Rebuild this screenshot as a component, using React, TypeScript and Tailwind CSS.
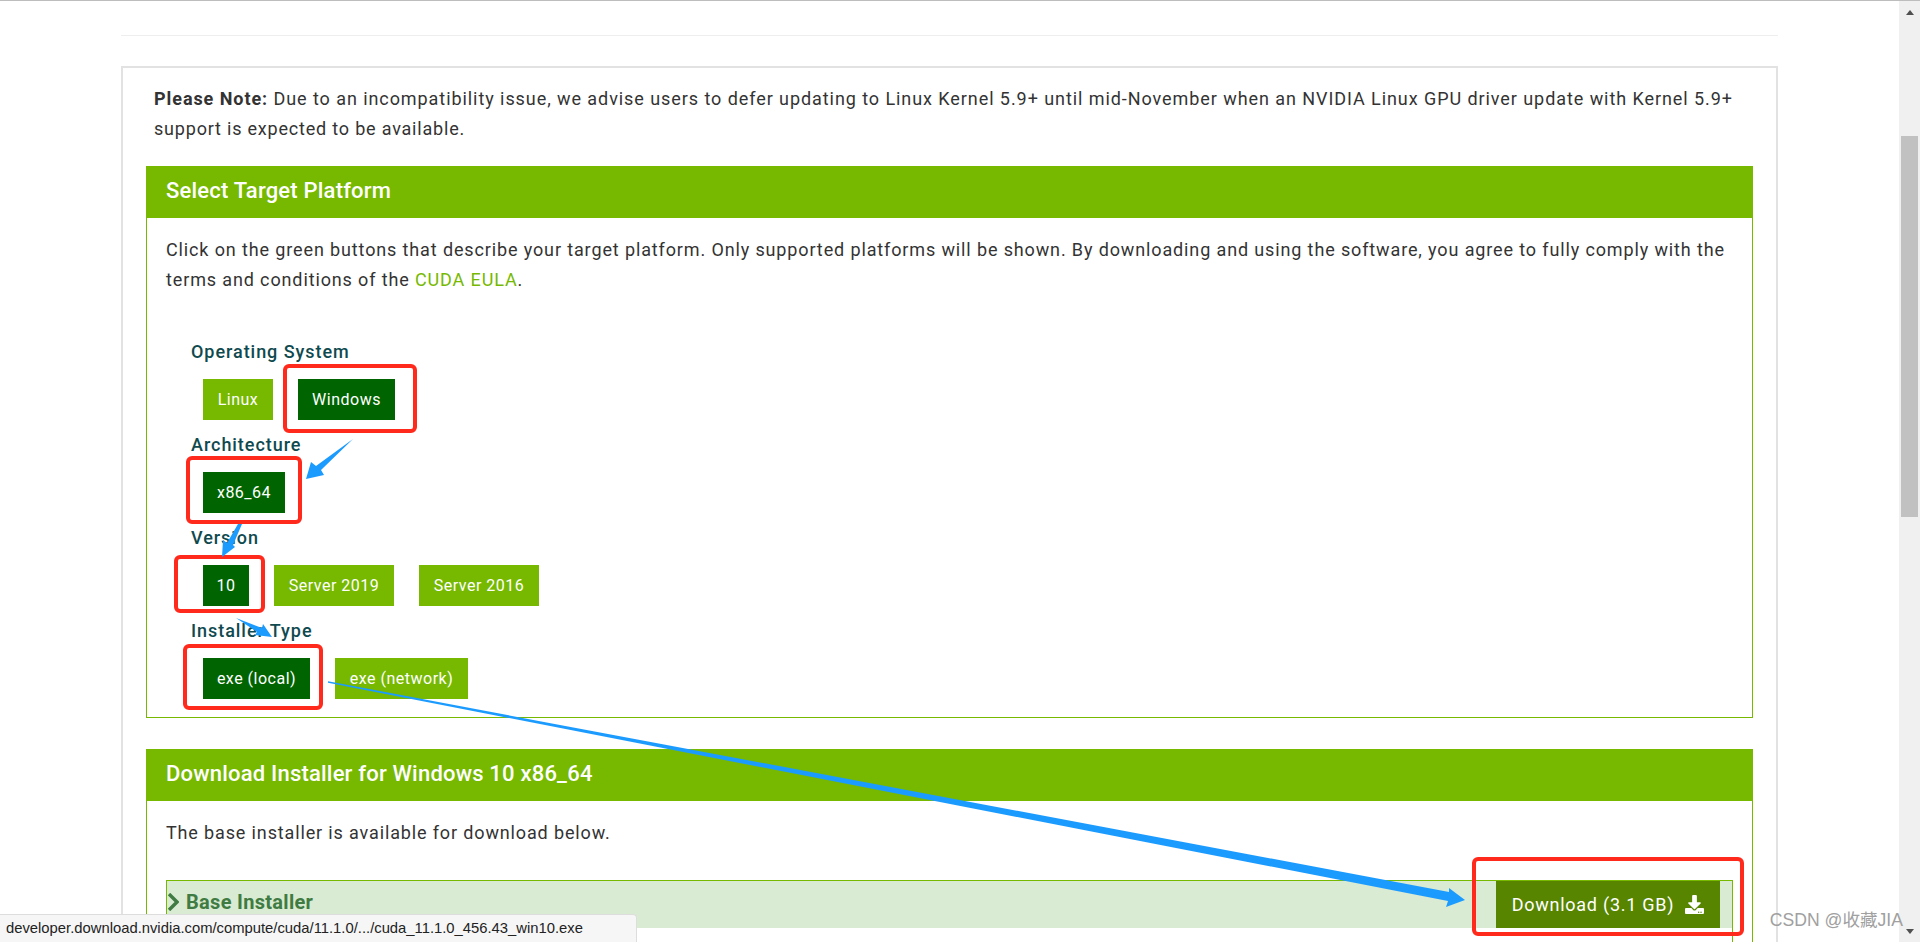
import { FaDownload } from "react-icons/fa";

const PlatformButton = ({ label, active, className }: { label: string; active?: boolean; className: string }) => (
  <div
    className={`h-[41px] flex items-center justify-center text-white text-[16px] tracking-[0.5px] ${active ? "bg-[#006400]" : "bg-[#76b900]"} ${className}`}
  >
    {label}
  </div>
);

const OptionLabel = ({ children }: { children: string }) => (
  <div className="h-[28px] ml-[44px] text-[18px] leading-[28px] font-medium text-[#0f4a4f] tracking-[0.95px]">{children}</div>
);

const Annotations = () => (
  <svg className="absolute left-0 top-0 pointer-events-none" width="1920" height="942" viewBox="0 0 1920 942" fill="none">
    <g stroke="#ff2a1c" strokeWidth="4">
      <rect x="285" y="366" width="130" height="65" rx="4" />
      <rect x="188" y="458" width="112" height="64" rx="4" />
      <rect x="176" y="557" width="87" height="54" rx="4" />
      <rect x="185" y="646" width="136" height="62" rx="4" />
      <rect x="1474" y="859" width="268" height="75" rx="4" />
    </g>
    <g fill="#1c9bff">
      <path d="M353 439 L321 470 L324 475 L306 479 L311 462 L316 466 Z" />
      <path d="M242 524 L233 545 L235 547 L222 557 L223 540 L227 543 L238 524 Z" />
      <path d="M236 618 L262 628 L263 624 L272 637 L255 635 L257 632 Z" />
      <path d="M328 681.3 L1449 892 L1449 888 L1465 900 L1446 907 L1448 901 L328 682.8 Z" />
    </g>
  </svg>
);

export default function App() {
  return (
    <div className="relative h-[942px] w-[1920px] overflow-hidden bg-white text-[#333] font-['Roboto',sans-serif]">
      <div className="h-px bg-[#bdbdbd]" />
      <div className="w-[1657px] ml-[121px] mt-[34px] border-t border-[#eeeeee]" />
      <div className="w-[1657px] ml-[121px] mt-[30px] border-2 border-[#e2e2e2] border-b-0 px-[23px] h-[900px]">
        <p className="mt-[16px] ml-[8px] text-[18px] leading-[30px] tracking-[0.93px] whitespace-nowrap">
          <b className="font-bold">Please Note:</b> Due to an incompatibility issue, we advise users to defer updating to Linux Kernel 5.9+ until mid-November when an NVIDIA Linux GPU driver update with Kernel 5.9+
          <br />
          <span className="tracking-[0.8px]">support is expected to be available.</span>
        </p>

        <section className="mt-[22px] border border-[#76b900]">
          <div className="h-[52px] -m-px mb-0 pb-[4px] bg-[#76b900] text-white text-[22px] font-medium tracking-[0.2px] flex items-center pl-[20px]">
            Select Target Platform
          </div>
          <div className="h-[499px] pt-[17px]">
            <p className="ml-[19px] text-[18px] leading-[30px] tracking-[0.87px] whitespace-nowrap">
              Click on the green buttons that describe your target platform. Only supported platforms will be shown. By downloading and using the software, you agree to fully comply with the
              <br />
              terms and conditions of the <span className="text-[#76b900]">CUDA EULA</span>.
            </p>
            <div className="mt-[43px]">
              <OptionLabel>Operating System</OptionLabel>
              <div className="flex ml-[56px] mt-[13px] mb-[11px] gap-[25px]">
                <PlatformButton label="Linux" className="w-[70px]" />
                <PlatformButton label="Windows" active className="w-[97px]" />
              </div>
              <OptionLabel>Architecture</OptionLabel>
              <div className="flex ml-[56px] mt-[13px] mb-[11px]">
                <PlatformButton label="x86_64" active className="w-[82px]" />
              </div>
              <OptionLabel>Version</OptionLabel>
              <div className="flex ml-[56px] mt-[13px] mb-[11px] gap-[25px]">
                <PlatformButton label="10" active className="w-[46px]" />
                <PlatformButton label="Server 2019" className="w-[120px]" />
                <PlatformButton label="Server 2016" className="w-[120px]" />
              </div>
              <OptionLabel>Installer Type</OptionLabel>
              <div className="flex ml-[56px] mt-[13px] gap-[25px]">
                <PlatformButton label="exe (local)" active className="w-[107px]" />
                <PlatformButton label="exe (network)" className="w-[133px]" />
              </div>
            </div>
          </div>
        </section>

        <section className="mt-[31px] border border-[#76b900]">
          <div className="h-[52px] -m-px mb-0 pb-[4px] bg-[#76b900] text-white text-[22px] font-medium tracking-[0.2px] flex items-center pl-[20px]">
            Download Installer for Windows 10 x86_64
          </div>
          <div className="pt-[17px] px-[19px] h-[300px]">
            <p className="text-[18px] leading-[30px] tracking-[0.86px]">The base installer is available for download below.</p>
            <div className="mt-[32px] border border-[#76b900] h-[200px]">
              <div className="h-[47px] bg-[#d9ebd3] flex items-center justify-between pr-[12px]">
                <div className="flex items-center pb-[5px] text-[20px] font-bold tracking-[0.3px] text-[#3f7b42]">
                  <svg width="12" height="18" viewBox="0 0 12 18" className="mr-[7px]">
                    <path d="M2 1 L10 9 L2 17" fill="none" stroke="#3f7b42" strokeWidth="3.4" />
                  </svg>
                  Base Installer
                </div>
                <div className="w-[224px] h-[47px] bg-[#578500] text-white text-[18px] tracking-[0.75px] flex items-center justify-center gap-[11px]">
                  Download (3.1 GB)
                  <FaDownload size={19} />
                </div>
              </div>
            </div>
          </div>
        </section>
      </div>

      <Annotations />

      <div className="absolute left-0 bottom-0 w-[637px] h-[28px] bg-[#f6f6f6] border-t border-r border-[#dddddd] rounded-tr-[4px] pl-[6px] flex items-center font-['Liberation_Sans',sans-serif] text-[14.8px] text-[#222]">
        developer.download.nvidia.com/compute/cuda/11.1.0/.../cuda_11.1.0_456.43_win10.exe
      </div>

      <div className="absolute right-0 top-[1px] bottom-0 w-[21px] bg-[#f0f0f0] flex flex-col items-center">
        <div className="mt-[9px] w-0 h-0 border-x-[4.5px] border-x-transparent border-b-[5px] border-b-[#505050]" />
        <div className="mt-[121px] h-[381px] w-[17px] bg-[#c1c1c1]" />
        <div className="absolute bottom-[8px] w-0 h-0 border-x-[4.5px] border-x-transparent border-t-[5px] border-t-[#505050]" />
      </div>

      <div className="absolute right-[17px] bottom-[9px] text-[17.6px] text-[#a0a0a0] font-['Liberation_Sans','Noto_Sans_CJK_SC',sans-serif]">
        CSDN @收藏JIA
      </div>
    </div>
  );
}
